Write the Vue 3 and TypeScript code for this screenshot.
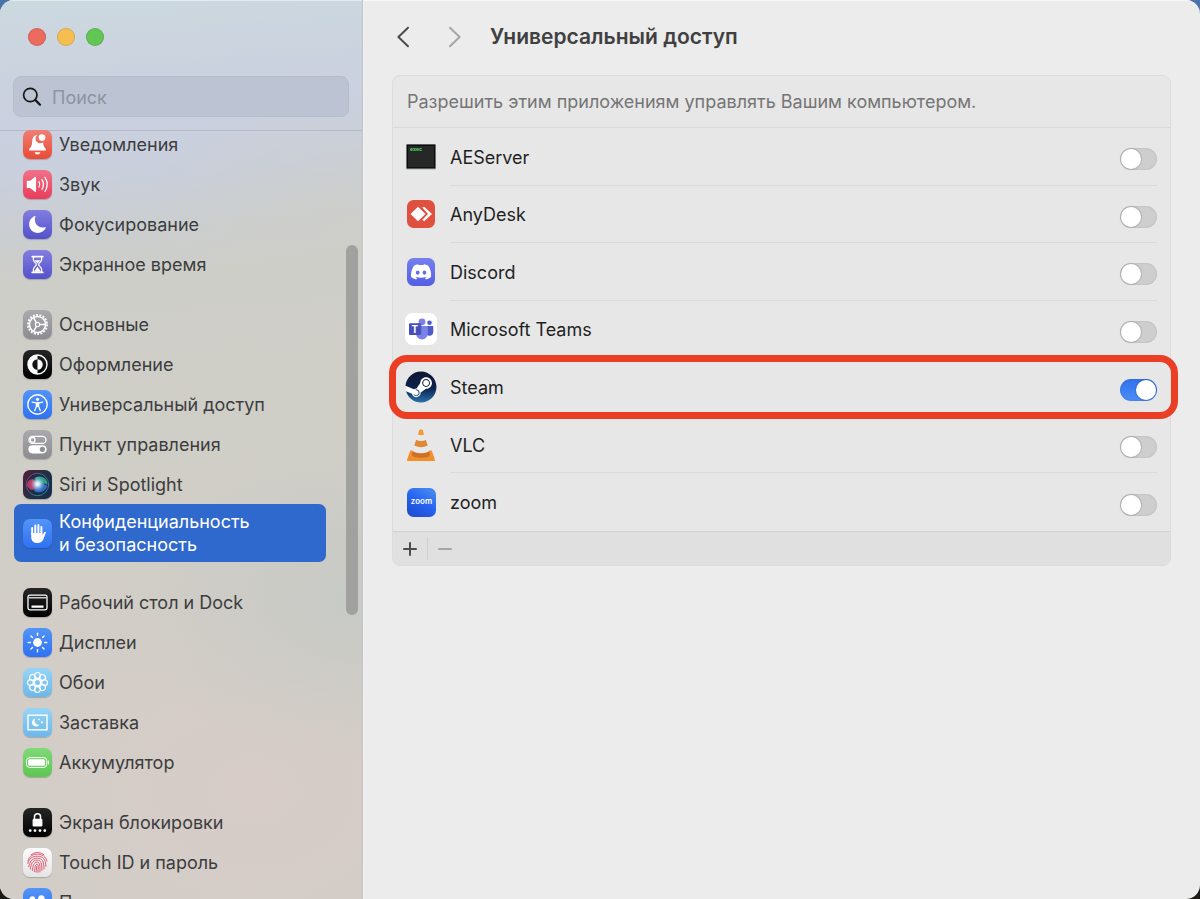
<script setup lang="ts">
import { ref } from 'vue'

interface NavItem {
  id: string
  label: string
}

interface AppEntry {
  id: string
  name: string
  enabled: boolean
}

const groups: NavItem[][] = [
  [
    { id: 'bell', label: 'Уведомления' },
    { id: 'sound', label: 'Звук' },
    { id: 'focus', label: 'Фокусирование' },
    { id: 'time', label: 'Экранное время' },
  ],
  [
    { id: 'general', label: 'Основные' },
    { id: 'look', label: 'Оформление' },
    { id: 'access', label: 'Универсальный доступ' },
    { id: 'control', label: 'Пункт управления' },
    { id: 'siri', label: 'Siri и Spotlight' },
    { id: 'privacy', label: 'Конфиденциальность и\u00a0безопасность' },
  ],
  [
    { id: 'dock', label: 'Рабочий стол и Dock' },
    { id: 'display', label: 'Дисплеи' },
    { id: 'wallpaper', label: 'Обои' },
    { id: 'saver', label: 'Заставка' },
    { id: 'battery', label: 'Аккумулятор' },
  ],
  [
    { id: 'lock', label: 'Экран блокировки' },
    { id: 'touch', label: 'Touch ID и пароль' },
    { id: 'users', label: 'Пользователи и группы' },
  ],
]

const selected = ref('privacy')
const query = ref('')

const apps = ref<AppEntry[]>([
  { id: 'aeserver', name: 'AEServer', enabled: false },
  { id: 'anydesk', name: 'AnyDesk', enabled: false },
  { id: 'discord', name: 'Discord', enabled: false },
  { id: 'teams', name: 'Microsoft Teams', enabled: false },
  { id: 'steam', name: 'Steam', enabled: true },
  { id: 'vlc', name: 'VLC', enabled: false },
  { id: 'zoom', name: 'zoom', enabled: false },
])

const petals = [0, 45, 90, 135, 180, 225, 270, 315]
</script>

<template>
  <div class="desktop">
    <div class="window">
      <aside class="sidebar">
        <header class="side-head">
          <div class="lights">
            <button class="light red" type="button" aria-label="Закрыть"></button>
            <button class="light yellow" type="button" aria-label="Свернуть"></button>
            <button class="light green" type="button" aria-label="Развернуть"></button>
          </div>
          <label class="search">
            <svg class="lens" viewBox="0 0 20 20" fill="none" stroke="#161616" stroke-linecap="round" aria-hidden="true">
              <circle cx="8.3" cy="8" r="6.7" stroke-width="1.7" />
              <path d="M13.2 12.9L18 17.7" stroke-width="2.2" />
            </svg>
            <input v-model="query" type="search" placeholder="Поиск" aria-label="Поиск" />
          </label>
        </header>

        <nav class="nav">
          <ul v-for="(group, gi) in groups" :key="gi" class="group">
            <li v-for="item in group" :key="item.id">
              <a
                href="#"
                class="nav-item"
                :class="{ active: item.id === selected }"
                @click.prevent="selected = item.id"
              >
                <span class="tile" :class="item.id">
                  <svg viewBox="0 0 29 29" fill="none" stroke="#fff" stroke-linecap="round" stroke-linejoin="round" aria-hidden="true">
                    <g v-if="item.id === 'bell'" stroke="none" fill="#fff">
                      <path d="M14.2 5C10.6 5.4 9.400 8 9.200 11.500C9 15.500 8.200 16.800 6.600 18.400C5.600 19.500 5.900 20.600 7.200 20.600H21.900C23.200 20.600 23.400 19.500 22.400 18.400C21 16.900 20.300 15.300 20.100 12.200A4.600 4.600 0 0 1 14.200 5Z" />
                      <path d="M11.600 22.200H17.400C16.900 23.700 15.900 24.400 14.500 24.400S12.100 23.700 11.600 22.200Z" />
                      <circle cx="19" cy="7.600" r="3.300" />
                    </g>
                    <g v-else-if="item.id === 'sound'" stroke-width="1.500">
                      <path d="M4.500 11.500H7.500L12.300 7.600V21.200L7.500 17.300H4.500Z" fill="#fff" />
                      <path d="M16 11.800Q17.600 14.400 16 17M19 9.600Q22 14.400 19 19.200M22 7.400Q26.500 14.400 22 21.400" stroke-width="1.300" />
                    </g>
                    <path v-else-if="item.id === 'focus'" stroke="none" fill="#fff" d="M11.600 5.900C12.100 5.600 12.600 5.900 12.400 6.600C10.300 13.500 15.300 18.900 21.900 17.300C22.700 17.100 23.100 17.500 22.800 18.100C21.200 21.200 18.300 23 14.900 23C10 23 6.100 19.100 6.100 14.300C6.100 10.500 8.200 7.400 11.600 5.900Z" />
                    <g v-else-if="item.id === 'time'">
                      <path d="M9.300 6.600H19.700M9.300 22.400H19.700" stroke-width="1.900" />
                      <path d="M10.400 7V9.500C10.400 12 13.400 13 13.400 14.500S10.400 17 10.400 19.500V22M18.600 7V9.500C18.600 12 15.600 13 15.600 14.500S18.600 17 18.600 19.500V22" stroke-width="1.300" />
                      <path d="M11.400 10.200H17.600L14.500 13.400ZM14.500 16.500L18 21.800H11Z" fill="#fff" stroke="none" />
                    </g>
                    <g v-else-if="item.id === 'general'" stroke-linecap="butt">
                      <circle cx="14.500" cy="14.500" r="9.500" stroke-width="2" stroke-dasharray="1.900 1.417" />
                      <circle cx="14.500" cy="14.500" r="8" stroke-width="1.500" />
                      <circle cx="14.500" cy="14.500" r="2.100" stroke-width="1.200" />
                      <path d="M16.600 14.500H22.500M13.400 12.700L10.500 7.600M13.400 16.300L10.500 21.400" stroke-width="1.500" />
                    </g>
                    <g v-else-if="item.id === 'look'" stroke="none" fill="#fff">
                      <circle cx="14.500" cy="14.500" r="9.500" fill="none" stroke="#fff" stroke-width="1.400" />
                      <path d="M14.500 4.800A9.700 9.700 0 0 0 14.500 24.200V19.700A5.200 5.200 0 0 1 14.500 9.300Z" />
                      <path d="M14.500 9.300A5.200 5.200 0 0 1 14.500 19.700Z" />
                    </g>
                    <g v-else-if="item.id === 'access'">
                      <circle cx="14.500" cy="14.500" r="9.700" stroke-width="1.400" />
                      <circle cx="14.500" cy="9.300" r="1.600" fill="#fff" stroke="none" />
                      <path d="M9.300 12.100L13 12.800H16L19.700 12.100M13.400 13V16.200L11.700 20.700M15.600 13V16.200L17.300 20.700" stroke-width="1.300" />
                      <path d="M13 12.600H16V17H13Z" fill="#fff" stroke="none" />
                    </g>
                    <g v-else-if="item.id === 'control'">
                      <rect x="6" y="6.400" width="17" height="7" rx="3.500" stroke-width="1.300" />
                      <circle cx="9.600" cy="9.900" r="2.400" stroke-width="1.300" />
                      <rect x="5.400" y="15.200" width="18.200" height="8.200" rx="4.100" fill="#fff" stroke="none" />
                      <circle cx="19.400" cy="19.300" r="2.600" fill="#8f8f94" stroke="none" />
                    </g>
                    <g v-else-if="item.id === 'siri'" stroke="none">
                      <defs>
                        <radialGradient id="siri-core">
                          <stop offset="0" stop-color="#fff" />
                          <stop offset="0.300" stop-color="#d8f1ff" stop-opacity="0.850" />
                          <stop offset="1" stop-color="#7ab0e0" stop-opacity="0" />
                        </radialGradient>
                        <linearGradient id="siri-ring" x1="0" y1="0" x2="1" y2="1">
                          <stop offset="0" stop-color="#8a3f80" />
                          <stop offset="0.450" stop-color="#54707f" />
                          <stop offset="1" stop-color="#2f8fc0" />
                        </linearGradient>
                      </defs>
                      <circle cx="14.500" cy="14.500" r="11.200" fill="#172c47" fill-opacity="0.600" stroke="url(#siri-ring)" stroke-width="0.900" />
                      <path d="M4 15C5 9 10 6 15 15C11 22 6 21 4 15Z" fill="#e63b6b" fill-opacity="0.800" />
                      <path d="M12 8C18 4 25 9 24.500 15C21 12 17 14 14 16Z" fill="#36c7a2" fill-opacity="0.750" />
                      <path d="M13 15C17 12 22 14 24.500 16C22 22 16 24 11 21Z" fill="#3a7fe0" fill-opacity="0.800" />
                      <circle cx="14.500" cy="14" r="7.500" fill="url(#siri-core)" />
                    </g>
                    <g v-else-if="item.id === 'privacy'">
                      <path d="M9.200 9V15M12.300 6.400V15M15.400 6V15M18.400 8V16" stroke-width="2" />
                      <path d="M8.200 14H19.400V16.500L21.200 13.200C21.900 12.200 23.200 12.600 22.800 13.800L20.500 20C19.400 22.800 17.600 24.100 14.500 24.100C10.500 24.100 8.200 21.800 8.200 17.800Z" fill="#fff" stroke="none" />
                    </g>
                    <g v-else-if="item.id === 'dock'">
                      <rect x="5" y="7.200" width="19" height="14.600" rx="1.800" stroke-width="1.300" />
                      <path d="M6 9.800H23" stroke-width="1.400" stroke="#c9c9c9" />
                      <path d="M8.500 18.600H20.500" stroke-width="2.400" stroke-linecap="butt" />
                    </g>
                    <g v-else-if="item.id === 'display'">
                      <circle cx="14.500" cy="14.500" r="4.400" fill="#fff" stroke="none" />
                      <path v-for="a in petals" :key="a" d="M14.500 5.200V7.400" stroke-width="1.400" :transform="`rotate(${a} 14.500 14.500)`" />
                    </g>
                    <g v-else-if="item.id === 'wallpaper'" stroke-width="1.200">
                      <circle cx="14.500" cy="14.500" r="3.100" />
                      <circle v-for="a in petals" :key="a" cx="14.500" cy="7.400" r="2.900" :transform="`rotate(${a} 14.500 14.500)`" />
                    </g>
                    <g v-else-if="item.id === 'saver'">
                      <rect x="5" y="7.200" width="19" height="14.600" stroke-width="1.400" stroke-linejoin="miter" />
                      <path d="M12.200 10.600A4 4 0 1 0 16.400 16.600A4 4 0 0 1 12.200 10.600Z" fill="#fff" stroke="none" />
                      <circle cx="18.900" cy="14.300" r="1.100" fill="#fff" stroke="none" />
                      <circle cx="16" cy="11.600" r="0.800" fill="#fff" stroke="none" />
                    </g>
                    <g v-else-if="item.id === 'battery'">
                      <rect x="3.500" y="9.600" width="20.200" height="9.800" rx="3" stroke-width="1" />
                      <rect x="5.200" y="11.300" width="16.800" height="6.400" rx="1.500" fill="#fff" stroke="none" />
                      <path d="M25.400 13.200V15.800" stroke-width="1.200" />
                    </g>
                    <g v-else-if="item.id === 'lock'">
                      <rect x="9.600" y="10.800" width="9.800" height="7.700" rx="1.300" fill="#fff" stroke="none" />
                      <path d="M11.500 11V8.800A3 3 0 0 1 17.500 8.800V11" stroke-width="1.500" />
                      <path d="M7.200 22.600H7.210M12 22.600H12.010M17 22.600H17.010M21.800 22.600H21.810" stroke-width="2.900" />
                    </g>
                    <g v-else-if="item.id === 'touch'" stroke="#e0566f" stroke-width="1">
                      <path d="M8 6.800A9.800 9.800 0 0 1 21 6.800M5 12.500C6.500 8 10 6.200 14.500 6.200S22.800 8.600 24 13" />
                      <path d="M4.800 15.500C5.500 11 9 8.200 14.500 8.200C19.500 8.200 23 11 22.900 18.500M5.800 18.800C6.500 14 8.500 10.200 14.500 10.200C19 10.200 21 13 21 21" />
                      <path d="M7.400 21C8 16 9 12.200 14.500 12.200C18 12.200 19 15 18.900 22.500M9.300 22.500C10 18 10.500 14.200 14.300 14.200C17 14.200 17.200 18 16.900 24" />
                      <path d="M11.400 23.500C12 20 12 16.300 14.200 16.300C15.600 16.300 15.300 20 14.900 24.300M13 24.200C13.400 22 13.600 20 13.700 18.500" />
                    </g>
                    <g v-else fill="#fff" stroke="none">
                      <ellipse cx="9.400" cy="11.800" rx="3" ry="3.600" />
                      <ellipse cx="18.400" cy="11.400" rx="3.400" ry="4.200" />
                      <path d="M3.600 22C3.600 18.400 6 16.400 9.600 16.400S13 18.400 13 22ZM12.600 22C13 18.400 15 16.600 18.600 16.600S25.400 18.400 25.400 22Z" />
                    </g>
                  </svg>
                </span>
                <span class="nav-label">{{ item.label }}</span>
              </a>
            </li>
          </ul>
        </nav>
        <div class="scroll-thumb" aria-hidden="true"></div>
      </aside>

      <main class="content">
        <header class="toolbar">
          <button class="arrow" type="button" aria-label="Назад">
            <svg viewBox="0 0 14 22" aria-hidden="true"><path d="M12 1.800L2.400 11L12 20.200" /></svg>
          </button>
          <button class="arrow forward" type="button" aria-label="Вперёд" disabled>
            <svg viewBox="0 0 14 22" aria-hidden="true"><path d="M2 1.800L11.600 11L2 20.200" /></svg>
          </button>
          <h1>Универсальный доступ</h1>
        </header>

        <section class="panel">
          <p class="hint">Разрешить этим приложениям управлять Вашим компьютером.</p>
          <ul class="apps">
            <li v-for="app in apps" :key="app.id" class="app" :class="{ marked: app.id === 'steam' }">
              <svg class="app-icon" viewBox="0 0 32 32" aria-hidden="true">
                <g v-if="app.id === 'aeserver'">
                  <rect x="1" y="3" width="30" height="25.500" rx="1" fill="#a9b1b4" />
                  <rect x="1.600" y="3.500" width="28.800" height="24" fill="#0c0c0c" />
                  <rect x="3" y="5" width="26" height="21.200" fill="#262827" />
                  <text x="5" y="9.500" class="exec">exec</text>
                </g>
                <g v-else-if="app.id === 'anydesk'">
                  <rect x="2" y="2" width="28" height="28" rx="6.500" fill="#e0503f" />
                  <path d="M13 8.700L20.500 16L13 23.300L5.500 16Z" fill="#fff" />
                  <path d="M17.300 9.600L19.200 8.700L27 16L19.200 23.300L17.300 21.800L23 16Z" fill="#fff" />
                </g>
                <g v-else-if="app.id === 'discord'">
                  <rect x="2" y="2" width="28" height="28" rx="6.500" fill="url(#discord-bg)" />
                  <path transform="translate(6 5.800) scale(0.840)" fill="#fff" d="M20.317 4.370a19.791 19.791 0 00-4.885-1.515.074.074 0 00-.079.037c-.211.375-.445.865-.608 1.250-1.845-.276-3.680-.276-5.487 0-.164-.393-.406-.874-.618-1.250a.077.077 0 00-.079-.037 19.736 19.736 0 00-4.885 1.515.070.070 0 00-.032.028C.533 9.046-.319 13.580.099 18.058a.082.082 0 00.031.056c2.053 1.508 4.041 2.423 5.993 3.029a.078.078 0 00.084-.028c.462-.630.873-1.295 1.226-1.994a.076.076 0 00-.042-.106c-.653-.248-1.274-.550-1.872-.892a.077.077 0 01-.008-.128c.126-.094.252-.192.372-.291a.074.074 0 01.078-.011c3.928 1.793 8.180 1.793 12.061 0a.074.074 0 01.079.010c.120.099.246.198.373.292a.077.077 0 01-.007.128 12.299 12.299 0 01-1.873.891.077.077 0 00-.041.107c.360.698.772 1.363 1.225 1.993a.076.076 0 00.084.029c1.961-.607 3.950-1.522 6.002-3.029a.077.077 0 00.031-.055c.500-5.177-.838-9.674-3.549-13.660a.061.061 0 00-.031-.029zM8.020 15.331c-1.183 0-2.157-1.086-2.157-2.419 0-1.333.956-2.419 2.157-2.419 1.211 0 2.176 1.095 2.157 2.419 0 1.333-.956 2.419-2.157 2.419zm7.975 0c-1.183 0-2.157-1.086-2.157-2.419 0-1.333.955-2.419 2.157-2.419 1.211 0 2.176 1.095 2.157 2.419 0 1.333-.946 2.419-2.157 2.419Z" />
                  <defs>
                    <linearGradient id="discord-bg" x1="0" y1="0" x2="0" y2="1">
                      <stop offset="0" stop-color="#7480ee" />
                      <stop offset="1" stop-color="#555de4" />
                    </linearGradient>
                  </defs>
                </g>
                <g v-else-if="app.id === 'teams'">
                  <rect x="0" y="0" width="32" height="32" rx="7.500" fill="#fff" />
                  <circle cx="24.500" cy="9.700" r="2.300" fill="#5059c9" />
                  <path d="M20.500 13H27.500Q28.300 13 28.300 13.800V18.500A4 4 0 0 1 20.500 20Z" fill="#5059c9" />
                  <circle cx="17" cy="8.800" r="3.400" fill="#7b83eb" />
                  <path d="M11.500 13H21.800Q22.800 13 22.800 14V20.500A5.900 5.900 0 0 1 11 20.500Z" fill="#7b83eb" />
                  <path d="M11.500 10.500H16.500V21.500H11.300Z" fill="#4a50b0" fill-opacity="0.600" />
                  <rect x="4" y="10.300" width="11.600" height="11.600" rx="1" fill="#464eb8" />
                  <text x="9.800" y="19.500" class="tee">T</text>
                </g>
                <g v-else-if="app.id === 'steam'">
                  <circle cx="16" cy="16" r="15" fill="#fff" />
                  <path transform="translate(0.500 0.500) scale(1.292)" fill="url(#steam-bg)" d="M11.979 0C5.678 0 .511 4.860.022 11.037l6.432 2.658c.545-.371 1.203-.590 1.912-.590.063 0 .125.004.188.006l2.861-4.142V8.910c0-2.495 2.028-4.524 4.524-4.524 2.494 0 4.524 2.031 4.524 4.527s-2.030 4.525-4.524 4.525h-.105l-4.076 2.911c0 .052.004.105.004.159 0 1.875-1.515 3.396-3.390 3.396-1.635 0-3.016-1.173-3.331-2.727L.436 15.270C1.862 20.307 6.486 24 11.979 24c6.627 0 11.999-5.373 11.999-12S18.605 0 11.979 0zM7.540 18.210l-1.473-.610c.262.543.714.999 1.314 1.250 1.297.539 2.793-.076 3.332-1.375.263-.630.264-1.319.005-1.949s-.750-1.121-1.377-1.383c-.624-.260-1.290-.249-1.878-.030l1.523.630c.956.400 1.409 1.500 1.009 2.455-.397.957-1.497 1.410-2.454 1.012H7.540zm11.415-9.303c0-1.662-1.353-3.015-3.015-3.015-1.665 0-3.015 1.353-3.015 3.015 0 1.665 1.350 3.015 3.015 3.015 1.663 0 3.015-1.350 3.015-3.015zm-5.273-.005c0-1.252 1.013-2.266 2.265-2.266 1.249 0 2.266 1.014 2.266 2.266 0 1.251-1.017 2.265-2.266 2.265-1.253 0-2.265-1.014-2.265-2.265z" />
                  <defs>
                    <linearGradient id="steam-bg" x1="0" y1="0" x2="0" y2="1">
                      <stop offset="0" stop-color="#0e1530" />
                      <stop offset="0.550" stop-color="#0d2350" />
                      <stop offset="1" stop-color="#2a72ac" />
                    </linearGradient>
                  </defs>
                </g>
                <g v-else-if="app.id === 'vlc'">
                  <path d="M5.300 21.500H26.700L30 31Q30.300 32 29.300 32H2.700Q1.700 32 2 31Z" fill="#f08f2c" />
                  <path d="M8.500 19.800H23.500L25 25.500Q25 28.800 16 28.800T7 25.500Z" fill="#cf6f24" />
                  <path d="M14.300 1.300Q16 -0.600 17.700 1.300L24.600 21.500Q22.500 24.300 16 24.300T7.400 21.500Z" fill="#e6e9ec" />
                  <path d="M14.300 1.300Q16 -0.600 17.700 1.300L19.100 5.600Q16 7 12.900 5.600Z" fill="#f39a35" />
                  <path d="M11.100 11Q16 13 20.900 11L22.700 16.600Q16 20 9.300 16.600Z" fill="#e38730" />
                </g>
                <g v-else>
                  <rect x="2" y="2" width="29" height="29" rx="6.500" fill="url(#zoom-bg)" />
                  <text x="16.500" y="18.300" class="zoom-word">zoom</text>
                  <defs>
                    <linearGradient id="zoom-bg" x1="0" y1="1" x2="0.600" y2="0">
                      <stop offset="0" stop-color="#1d48c8" />
                      <stop offset="0.600" stop-color="#2763f2" />
                      <stop offset="1" stop-color="#4085f0" />
                    </linearGradient>
                  </defs>
                </g>
              </svg>
              <div class="app-body">
                <label :for="`app-${app.id}`">{{ app.name }}</label>
                <input :id="`app-${app.id}`" v-model="app.enabled" class="switch" type="checkbox" role="switch" />
              </div>
            </li>
          </ul>
          <footer class="panel-foot">
            <button type="button" aria-label="Добавить">
              <svg viewBox="0 0 14 14" aria-hidden="true"><path d="M7 1V13M1 7H13" stroke="#4c4c4c" /></svg>
            </button>
            <span class="split"></span>
            <button type="button" aria-label="Удалить" disabled>
              <svg viewBox="0 0 14 14" aria-hidden="true"><path d="M1 7H13" stroke="#a6a6a6" /></svg>
            </button>
          </footer>
        </section>
      </main>
    </div>
  </div>
</template>

<style>
body {
  margin: 0;
}
</style>

<style scoped>
.desktop {
  height: 100vh;
  overflow: hidden;
  background: linear-gradient(#4a74ab 0, #2f5590 20%, #1c1a14 90%);
  font-family: Inter, "Liberation Sans", sans-serif;
  font-size: 18px;
  line-height: 23px;
  color: #3c3d3e;
}

.window {
  display: flex;
  height: 100%;
  overflow: hidden;
  border-radius: 14px;
  background: #ececec;
}

.window * {
  box-sizing: border-box;
}

ul {
  margin: 0;
  padding: 0;
  list-style: none;
}

button {
  display: flex;
  align-items: center;
  justify-content: center;
  padding: 0;
  border: 0;
  background: none;
}

.sidebar {
  position: relative;
  display: flex;
  flex: 0 0 363px;
  flex-direction: column;
  min-width: 0;
  border-right: 1px solid #bfc1c4;
  background:
    radial-gradient(ellipse 240px 160px at 100% 67%, rgba(198, 202, 197, 0.9), rgba(198, 202, 197, 0)),
    radial-gradient(ellipse 260px 200px at 70% 88%, rgba(216, 204, 199, 0.9), rgba(216, 204, 199, 0)),
    radial-gradient(ellipse 220px 140px at 100% 25%, rgba(206, 206, 200, 0.7), rgba(206, 206, 200, 0)),
    linear-gradient(176deg, #ccd9df 0, #cbd2df 9%, #cbd0e0 14%, #c9cfdb 20%, #cbcecf 26%, #cecec8 31%, #cfcec7 50%, #d2cdc7 66%, #d2cdc7 100%);
  box-shadow: inset 0 1px 0 #e3eaee;
}

.side-head {
  flex: none;
  padding: 28px 13px 13px;
  border-bottom: 1px solid #b3b9c6;
}

.lights {
  display: flex;
  gap: 11px;
  padding-left: 15px;
}

.light {
  width: 18px;
  height: 18px;
  border: 1px solid rgba(0, 0, 0, 0.12);
  border-radius: 50%;
}

.red {
  background: #ed6a5f;
}

.yellow {
  background: #f6be50;
}

.green {
  background: #62c655;
}

.search {
  display: flex;
  align-items: center;
  gap: 10px;
  height: 41px;
  margin-top: 30px;
  padding: 0 8px;
  border: 1px solid #b5bccb;
  border-radius: 8px;
  background: #bcc3d2;
}

.lens {
  flex: none;
  width: 20px;
  height: 20px;
}

.search input {
  flex: 1;
  width: 100%;
  min-width: 0;
  padding: 1px 0 0;
  border: 0;
  outline: 0;
  background: none;
  font: inherit;
  color: #2c2d2f;
}

.search input::placeholder {
  color: #8d94a2;
  opacity: 1;
}

.nav {
  flex: 1;
  min-height: 0;
  margin-top: -7px;
  padding: 0 36px 0 14px;
  overflow: hidden;
}

.group + .group {
  margin-top: 20px;
}

.nav-item {
  display: flex;
  align-items: center;
  gap: 7px;
  min-height: 40px;
  padding: 5px 9px;
  border-radius: 7px;
  color: inherit;
  text-decoration: none;
}

.nav-label {
  flex: 1;
}

.nav-item.active {
  min-height: 58px;
  background: #3069cd;
  color: #fff;
}

.tile {
  flex: none;
  width: 29px;
  height: 29px;
  border-radius: 7px;
  box-shadow: 0 1px 1px rgba(0, 0, 0, 0.2);
  overflow: hidden;
}

.tile svg {
  display: block;
  width: 29px;
  height: 29px;
}

.bell {
  background: linear-gradient(#ee7f72, #eb4a36);
}

.sound {
  background: linear-gradient(#ef7289, #eb3c5a);
}

.focus,
.time {
  background: linear-gradient(#837ddf, #5451cc);
}

.general,
.control {
  background: linear-gradient(#a9a9ae, #8b8b90);
}

.look,
.dock,
.lock {
  background: linear-gradient(#262626, #000);
}

.access,
.privacy,
.display,
.users {
  background: linear-gradient(#5294f7, #2f71f3);
}

.siri {
  background: linear-gradient(120deg, #581a3c, #223143 50%, #122c50);
}

.wallpaper,
.saver {
  background: linear-gradient(#96d5f6, #6cb7ea);
}

.battery {
  background: linear-gradient(#80d977, #5dc552);
}

.touch {
  background: linear-gradient(#fcfcfc, #e5e4e4);
}

.scroll-thumb {
  position: absolute;
  top: 245px;
  right: 4px;
  width: 12px;
  height: 370px;
  border-radius: 6px;
  background: #a1a29f;
}

.content {
  flex: 1;
  min-width: 0;
  padding: 0 29px 0 28px;
  border-left: 1px solid #f3f3f3;
  box-shadow: inset 0 1px 0 #f8f8f8;
}

.toolbar {
  display: flex;
  align-items: center;
  height: 75px;
  padding: 0 0 2px 4px;
}

.arrow {
  width: 14px;
  height: 22px;
  margin-right: 38px;
}

.arrow.forward {
  margin-right: 28px;
}

.arrow svg {
  width: 14px;
  height: 22px;
  fill: none;
  stroke: #4b4b4b;
  stroke-width: 2;
  stroke-linecap: round;
  stroke-linejoin: round;
}

.arrow.forward svg {
  stroke: #a6a6a6;
}

h1 {
  margin: 0;
  font-size: 21px;
  line-height: 28px;
  font-weight: 600;
  color: #404040;
}

.panel {
  border: 1px solid #dcdcdc;
  border-radius: 8px;
  background: #e7e7e7;
}

.hint {
  margin: 0;
  padding: 14px 14px;
  border-bottom: 1px solid #dadada;
  color: #757575;
}

.apps {
  display: grid;
  grid-auto-rows: 1fr;
  min-height: 403px;
}

.app {
  position: relative;
  display: flex;
  align-items: center;
  gap: 13px;
  padding: 0 13px 0 12px;
}

.app-icon {
  flex: none;
  width: 32px;
  height: 32px;
}

.app-body {
  display: flex;
  flex: 1;
  align-items: center;
  justify-content: space-between;
  align-self: stretch;
  border-bottom: 1px solid #dadada;
  color: #1f1f1f;
}

.app-body label {
  padding-top: 2px;
}

.app:last-child .app-body {
  border-bottom-color: transparent;
}

.app.marked::after {
  position: absolute;
  inset: -3px -8px -3px -4px;
  border: 7px solid #ea3f25;
  border-radius: 18px;
  content: "";
  pointer-events: none;
}

.switch {
  width: 37px;
  height: 22px;
  margin: 6px 0 0;
  padding: 1px;
  appearance: none;
  border-radius: 11px;
  background: #cecece;
  box-shadow: inset 0 0 1px 1px rgba(0, 0, 0, 0.05);
}

.switch::before {
  display: block;
  width: 20px;
  height: 20px;
  border-radius: 50%;
  background: #fff;
  box-shadow: 0 0 1px 1px rgba(0, 0, 0, 0.13);
  content: "";
}

.switch:checked {
  background: linear-gradient(#3172ec, #4a8df7);
}

.switch:checked::before {
  margin-left: 15px;
}

.panel-foot {
  display: flex;
  align-items: center;
  gap: 10px;
  height: 34px;
  padding: 0 10px;
  border-top: 1px solid #d2d2d2;
  border-radius: 0 0 7px 7px;
  background: #e0e0e0;
}

.panel-foot svg {
  width: 14px;
  height: 14px;
  stroke-width: 2;
  stroke-linecap: round;
}

.split {
  width: 1px;
  height: 23px;
  background: #cfcfcf;
}

.exec {
  font: 700 5px "Liberation Mono", monospace;
  fill: #5fe06a;
}

.tee {
  font: 700 10px "Liberation Sans", sans-serif;
  fill: #fff;
  text-anchor: middle;
}

.zoom-word {
  font: 600 8px Inter, sans-serif;
  fill: #fff;
  text-anchor: middle;
}
</style>
